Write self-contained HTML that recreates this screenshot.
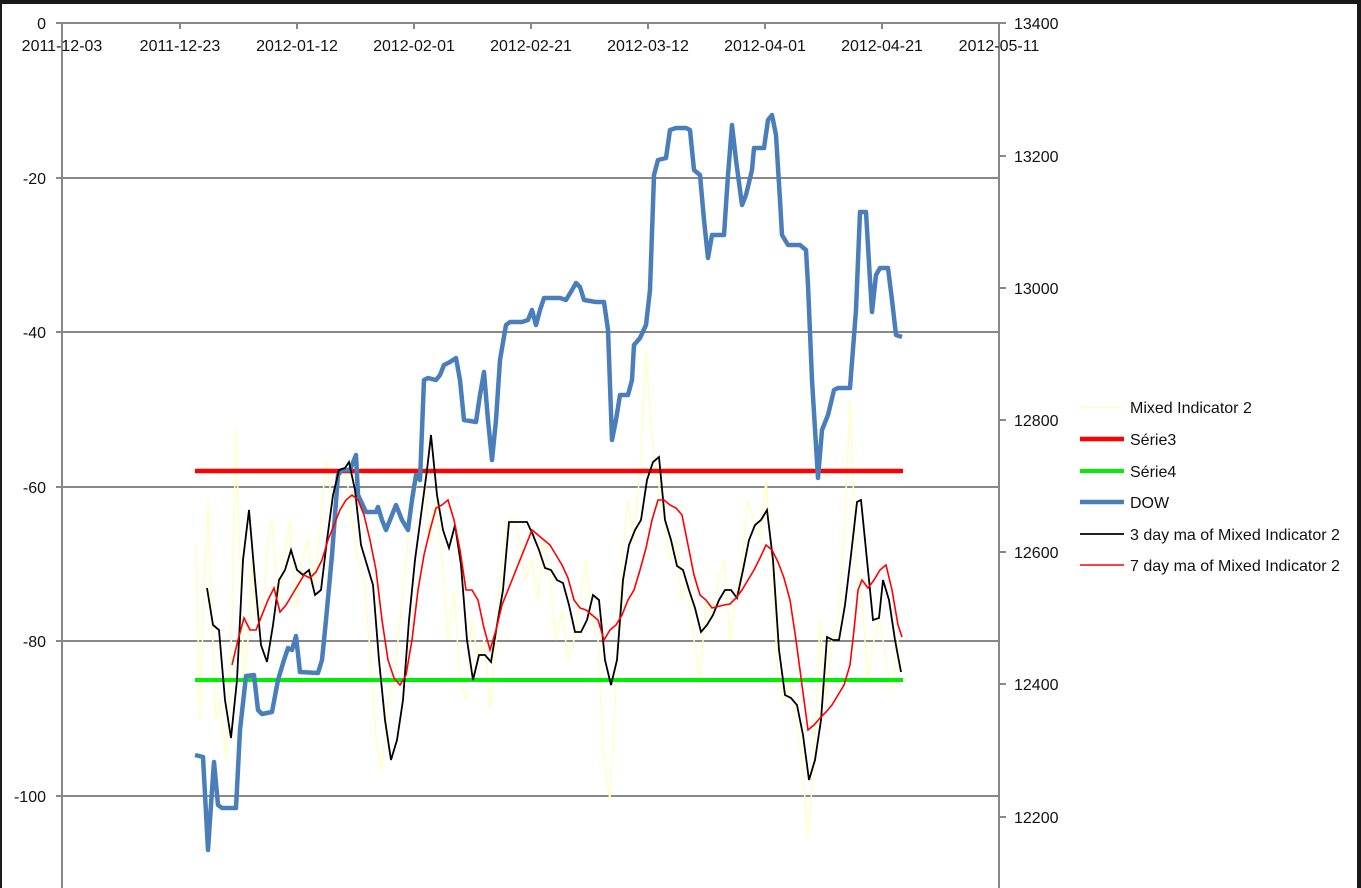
<!DOCTYPE html>
<html><head><meta charset="utf-8"><style>
html,body{margin:0;padding:0;background:#fff;}
svg{display:block;}
text{font-family:"Liberation Sans",sans-serif;font-size:16px;fill:#111;}
</style></head><body>
<svg width="1361" height="888" viewBox="0 0 1361 888" xmlns="http://www.w3.org/2000/svg">
<rect x="0" y="0" width="1361" height="888" fill="#fff"/>
<rect x="0" y="0" width="1361" height="4" fill="#1a1a1a"/>
<rect x="0" y="0" width="2" height="888" fill="#1a1a1a"/>
<rect x="1357" y="0" width="4" height="888" fill="#1a1a1a"/>
<g stroke="#888" stroke-width="2" fill="none">
<line x1="56" y1="23" x2="999" y2="23"/>
<line x1="56" y1="178" x2="999" y2="178"/>
<line x1="56" y1="332" x2="999" y2="332"/>
<line x1="56" y1="487" x2="999" y2="487"/>
<line x1="56" y1="641" x2="999" y2="641"/>
<line x1="56" y1="796" x2="999" y2="796"/>
<line x1="62" y1="23" x2="62" y2="888"/>
<line x1="999" y1="23" x2="999" y2="888"/>
<line x1="180" y1="23" x2="180" y2="29"/><line x1="297" y1="23" x2="297" y2="29"/><line x1="414" y1="23" x2="414" y2="29"/><line x1="531" y1="23" x2="531" y2="29"/><line x1="648" y1="23" x2="648" y2="29"/><line x1="765" y1="23" x2="765" y2="29"/><line x1="882" y1="23" x2="882" y2="29"/>
<line x1="999" y1="156" x2="1006" y2="156"/><line x1="999" y1="288" x2="1006" y2="288"/><line x1="999" y1="420" x2="1006" y2="420"/><line x1="999" y1="552" x2="1006" y2="552"/><line x1="999" y1="684" x2="1006" y2="684"/><line x1="999" y1="817" x2="1006" y2="817"/><line x1="999" y1="23" x2="1006" y2="23"/>
</g>
<g text-anchor="end">
<text x="46" y="29">0</text><text x="46" y="184">-20</text><text x="46" y="338">-40</text><text x="46" y="493">-60</text><text x="46" y="647">-80</text><text x="46" y="802">-100</text>
</g>
<g>
<text x="1014" y="29">13400</text><text x="1014" y="162">13200</text><text x="1014" y="294">13000</text><text x="1014" y="426">12800</text><text x="1014" y="558">12600</text><text x="1014" y="690">12400</text><text x="1014" y="823">12200</text>
</g>
<g text-anchor="middle">
<text x="62" y="51">2011-12-03</text><text x="180" y="51">2011-12-23</text><text x="297" y="51">2012-01-12</text><text x="414" y="51">2012-02-01</text><text x="531" y="51">2012-02-21</text><text x="648" y="51">2012-03-12</text><text x="765" y="51">2012-04-01</text><text x="882" y="51">2012-04-21</text><text x="999" y="51">2012-05-11</text>
</g>
<polyline fill="none" stroke="#ffffc8" stroke-width="1.5" points="196,545 200,720 204,590 208,500 212,620 216,720 220,700 226,760 232,620 236,430 240,560 244,680 248,640 252,560 256,620 262,620 268,540 272,520 278,600 284,560 290,520 296,610 302,560 308,540 314,590 320,530 326,460 332,500 340,480 346,470 352,520 358,560 364,580 370,650 376,740 382,770 388,700 394,680 400,620 406,560 412,500 418,480 424,470 430,540 436,500 442,560 448,640 454,590 460,680 466,700 472,620 478,660 484,640 490,710 496,640 502,560 508,520 514,520 520,540 526,580 532,560 538,600 544,540 550,580 556,640 562,610 568,660 574,640 580,600 586,560 592,620 598,640 604,760 610,800 616,680 622,560 628,500 634,540 640,470 646,350 652,440 658,480 664,520 670,560 676,540 682,600 688,580 694,640 700,680 706,600 712,620 718,580 724,560 730,640 736,600 742,560 748,500 754,520 760,540 766,480 772,560 778,680 784,700 790,680 796,720 802,760 808,840 814,760 820,620 826,700 832,640 838,620 844,540 850,400 856,560 862,600 868,680 874,640 880,620 886,660 892,690 898,640"/>
<line x1="195" y1="471" x2="903" y2="471" stroke="#ff0000" stroke-width="4.5"/>
<line x1="195" y1="680" x2="903" y2="680" stroke="#00ee00" stroke-width="4"/>
<polyline fill="none" stroke="#4a7ebb" stroke-width="4.5" stroke-linejoin="round" points="195,755 203,757 208,850 212,790 214,762 218,805 222,808 236,808 240,730 246,676 254,675 258,710 262,714 272,712 278,680 284,660 288,648 292,650 296,636 300,672 318,673 322,660 326,620 332,555 338,475 342,470 350,470 356,455 358,495 366,512 376,512 378,507 382,520 386,530 390,520 396,505 402,520 408,530 412,500 416,475 420,480 424,380 428,378 436,380 440,375 444,365 450,362 456,358 460,380 464,420 476,422 480,395 484,372 488,420 492,460 496,420 500,360 506,325 510,322 522,322 528,320 532,310 536,325 540,310 544,298 560,298 566,300 572,290 576,283 580,287 584,300 596,302 604,302 608,330 612,440 616,420 620,395 628,395 632,380 634,345 640,338 646,325 650,290 654,175 658,160 666,158 670,130 676,128 686,128 690,130 694,170 700,175 704,220 708,258 712,235 724,235 728,175 732,125 736,160 742,205 746,195 752,170 754,148 764,148 768,120 772,115 776,135 780,200 782,235 788,245 800,245 806,250 808,285 812,380 818,478 822,430 828,415 834,390 838,388 850,388 856,310 860,212 866,212 870,280 872,312 876,275 880,268 888,268 892,300 896,335 902,337"/>
<polyline fill="none" stroke="#000" stroke-width="1.8" points="207,588 213,625 219,630 225,700 231,738 237,680 243,560 249,510 255,580 261,645 267,662 273,625 279,580 285,570 291,550 297,570 303,575 309,570 315,595 321,590 327,540 333,495 339,470 345,468 349,462 355,490 361,545 367,565 373,585 379,660 385,720 391,760 397,740 403,700 409,620 415,560 421,515 427,470 431,435 437,495 443,530 449,548 455,525 461,565 467,640 473,680 479,655 485,655 491,662 497,625 503,590 509,522 527,522 533,535 539,550 545,568 551,570 557,580 563,583 569,605 575,632 581,632 587,620 593,595 599,600 605,660 611,685 617,660 623,580 629,545 635,530 641,520 647,480 653,462 659,457 665,520 671,540 677,566 683,570 689,590 695,608 701,632 707,625 713,615 719,600 725,590 731,590 737,598 743,570 749,540 755,525 761,520 767,510 773,560 779,650 785,695 791,698 797,705 803,735 809,780 815,760 821,720 827,637 833,640 839,640 845,605 851,555 857,502 861,500 867,560 873,620 879,618 883,580 889,600 895,640 901,672"/>
<polyline fill="none" stroke="#ff0000" stroke-width="1.6" points="232,665 238,640 244,618 250,630 256,630 262,615 268,600 274,588 280,612 286,605 292,595 298,585 304,575 310,578 316,572 322,560 328,540 334,525 340,510 346,500 352,495 358,500 364,515 370,540 376,570 382,620 388,660 394,678 400,685 406,675 412,640 418,590 424,555 430,530 436,508 442,505 448,500 454,520 460,550 466,590 472,590 478,600 484,628 490,650 496,630 502,605 508,590 514,575 520,560 526,545 532,530 538,535 544,540 550,545 556,555 562,565 568,578 574,600 580,608 586,610 592,615 598,620 604,640 610,630 616,625 622,615 628,600 634,590 640,570 646,548 652,520 658,500 664,500 670,505 676,508 682,515 688,545 694,575 700,595 706,600 712,608 724,605 730,604 736,598 742,590 748,580 754,570 760,558 766,545 772,550 778,562 784,578 790,600 796,640 802,685 808,730 814,725 820,718 826,712 832,705 838,695 844,685 850,665 854,630 858,590 862,580 868,588 874,580 880,570 886,565 892,590 898,625 902,637"/>
<g>
<line x1="1080" y1="407" x2="1124" y2="407" stroke="#ffffc8" stroke-width="2" stroke-dasharray="2,1"/>
<line x1="1080" y1="439" x2="1124" y2="439" stroke="#ff0000" stroke-width="4.5"/>
<line x1="1080" y1="471" x2="1124" y2="471" stroke="#00ee00" stroke-width="4"/>
<line x1="1080" y1="502" x2="1124" y2="502" stroke="#4a7ebb" stroke-width="4.5"/>
<line x1="1080" y1="534" x2="1124" y2="534" stroke="#000" stroke-width="1.8"/>
<line x1="1080" y1="565" x2="1124" y2="565" stroke="#ff0000" stroke-width="1.6"/>
<text x="1130" y="413">Mixed Indicator 2</text>
<text x="1130" y="445">Série3</text>
<text x="1130" y="477">Série4</text>
<text x="1130" y="508">DOW</text>
<text x="1130" y="540">3 day ma of Mixed Indicator 2</text>
<text x="1130" y="571">7 day ma of Mixed Indicator 2</text>
</g>
</svg>
</body></html>
